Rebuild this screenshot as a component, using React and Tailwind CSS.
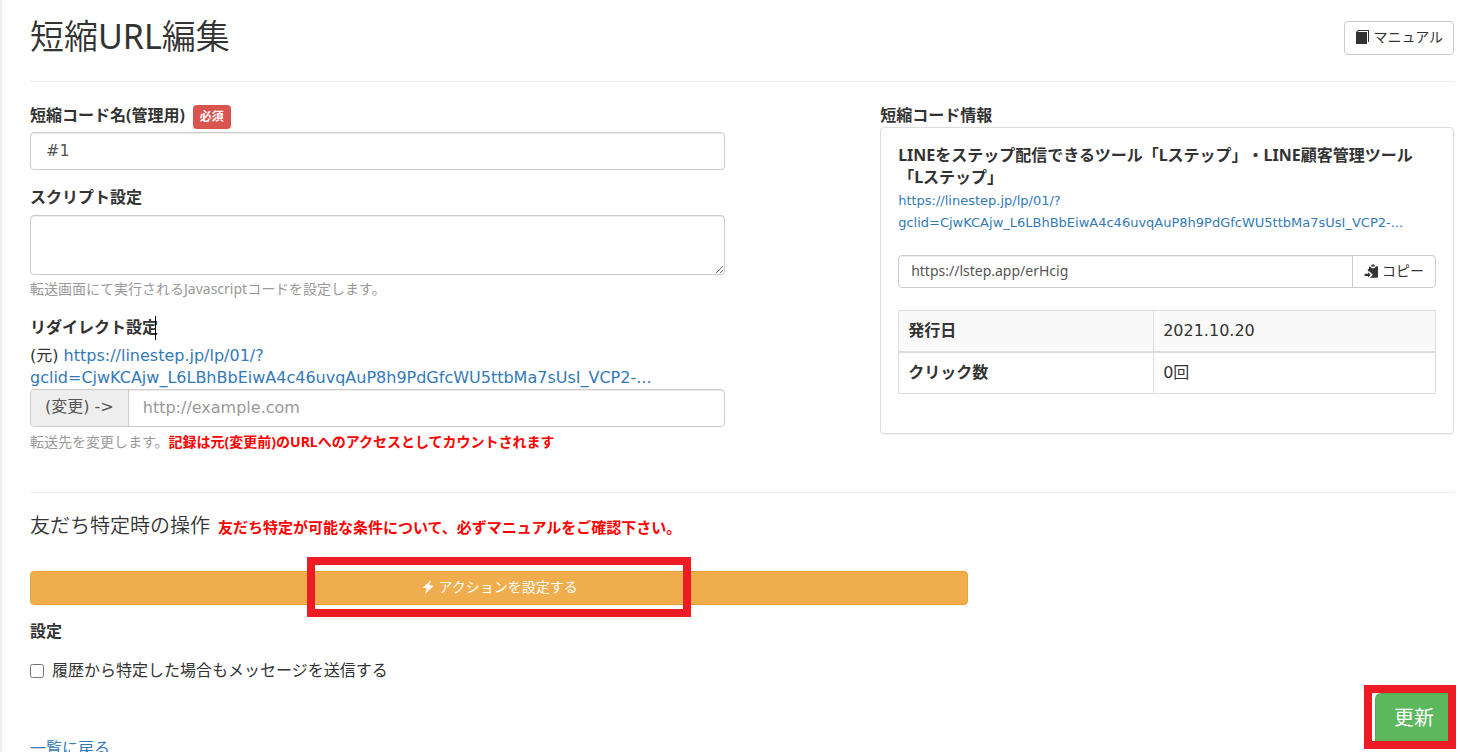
import React from "react";

const ORIGINAL_URL =
  "https://linestep.jp/lp/01/?gclid=CjwKCAjw_L6LBhBbEiwA4c46uvqAuP8h9PdGfcWU5ttbMa7sUsI_VCP2-...";

function BookIcon() {
  return (
    <svg viewBox="0 0 14 14" className="h-3.5 w-3.5" aria-hidden="true">
      <path d="M3 0h11v12h-1V1H3.500L2.500 2H12v12H1V2z" fill="currentColor" />
    </svg>
  );
}

function CopyIcon() {
  return (
    <svg viewBox="0 0 14 14" className="h-3.5 w-3.5" aria-hidden="true">
      <path
        d="M7 2.300C7 1 7.900.400 9 .400s2 .600 2 1.900L9.900 2.500H8.100zM6 2.300 7.600 4.300h2.800L12 2.300h1.200c.5 0 .8.3.8.8V13c0 .5-.3.8-.8.8H5.800L8.800 10.800 5.500 7.500 4.300 7.200 3.600 5.400 5 4.800V3z"
        fill="currentColor"
      />
      <path d="M4 8.200 6.800 10.800 4 13.400V11.900H.6V9.700H4z" fill="currentColor" />
    </svg>
  );
}

function FlashIcon() {
  return (
    <svg viewBox="0 0 14 14" className="h-3.5 w-3.5" aria-hidden="true">
      <path d="M10 0 1.800 7.800 6 8.500 3.800 14 12.800 5.700 8.200 5.200z" fill="currentColor" />
    </svg>
  );
}

function OriginalLink() {
  return (
    <a href={ORIGINAL_URL} className="text-[#337ab7]">
      https://linestep.jp/lp/01/?<wbr />
      gclid=CjwKCAjw_L6LBhBbEiwA4c46uvqAuP8h9PdGfcWU5ttbMa7sUsI_VCP2-...
    </a>
  );
}

export default function App() {
  return (
    <div className="h-screen overflow-hidden border-l-2 border-[#eeeeee] bg-white pr-1.5 pl-7 font-['Noto_Sans','Noto_Sans_CJK_JP',sans-serif] text-base leading-[22px] text-[#333333] [text-spacing-trim:space-all]">
      <header className="flex h-[82px] items-start justify-between border-b border-[#eeeeee]">
        <h1 className="pt-4 text-[34px] leading-10 font-[350]">
          短縮<span className="font-normal">URL</span>編集
        </h1>
        <a
          href="#manual"
          className="mt-[21px] flex h-[34px] items-center gap-1 rounded border border-[#cccccc] px-2.5 pb-0.5 text-sm"
        >
          <BookIcon />
          マニュアル
        </a>
      </header>

      <main>
        <div className="flex items-start justify-between border-b border-[#eeeeee] pt-[22px] pb-[39px]">
          <form className="w-[48.8%]">
            <div className="flex h-7 items-start gap-2">
              <label htmlFor="code-name" className="font-bold">
                短縮コード名(管理用)
              </label>
              <span className="mt-px flex h-6 items-center rounded-sm bg-[#d9534f] px-[7px] text-xs font-bold text-white">
                必須
              </span>
            </div>
            <input
              id="code-name"
              type="text"
              defaultValue="#1"
              className="block h-[38px] w-full rounded border border-[#cccccc] px-[15px] pb-0.5 font-['DejaVu_Sans','Noto_Sans_CJK_JP',sans-serif] text-[#555555] shadow-[inset_0_1px_1px_rgba(0,0,0,0.075)]"
            />

            <label htmlFor="script" className="mt-4 mb-[7px] block font-bold">
              スクリプト設定
            </label>
            <textarea
              id="script"
              className="block h-[60px] w-full resize-y rounded border border-[#cccccc] px-3 py-1.5 shadow-[inset_0_1px_1px_rgba(0,0,0,0.075)]"
            />
            <p className="mt-[3px] text-sm leading-[22px] text-[#999999]">
              転送画面にて実行されるJavascriptコードを設定します。
            </p>

            <div className="mt-4 mb-[7px] flex">
              <label htmlFor="redirect" className="relative font-bold">
                リダイレクト設定
                <span className="absolute top-0 right-0.5 h-6 w-px bg-black" />
              </label>
            </div>
            <p className="font-['DejaVu_Sans','Noto_Sans_CJK_JP',sans-serif]">
              (元) <OriginalLink />
            </p>
            <div className="flex h-[38px] rounded border border-[#cccccc] font-['DejaVu_Sans','Noto_Sans_CJK_JP',sans-serif]">
              <span className="flex items-center rounded-l border-r border-[#cccccc] bg-[#eeeeee] px-3.5 pb-0.5 text-[#555555]">
                (変更) -&gt;
              </span>
              <input
                id="redirect"
                type="text"
                placeholder="http://example.com"
                className="min-w-0 flex-1 rounded-r px-3.5 shadow-[inset_0_1px_1px_rgba(0,0,0,0.075)] placeholder:text-[#999999]"
              />
            </div>
            <p className="mt-1 text-sm leading-[22px] text-[#999999]">
              転送先を変更します。
              <strong className="text-[#ff0000]">
                記録は元(変更前)のURLへのアクセスとしてカウントされます
              </strong>
            </p>
          </form>

          <section className="w-[40.3%]">
            <h2 className="font-bold">短縮コード情報</h2>
            <div className="mt-px rounded border border-[#dddddd] px-[17px] pt-4 pb-[39px] shadow-[0_1px_1px_rgba(0,0,0,0.05)]">
              <p className="font-bold">
                LINEをステップ配信できるツール「Lステップ」・LINE顧客管理ツール「Lステップ」
              </p>
              <p className="pt-0.5 font-['DejaVu_Sans','Noto_Sans_CJK_JP',sans-serif] text-[13px] leading-[22px]">
                <OriginalLink />
              </p>
              <div className="mt-[21px] flex h-[33px] rounded border border-[#cccccc] text-sm">
                <input
                  type="text"
                  readOnly
                  aria-label="短縮URL"
                  defaultValue="https://lstep.app/erHcig"
                  className="min-w-0 flex-1 rounded-l px-3 pb-0.5 text-[#555555] shadow-[inset_0_1px_1px_rgba(0,0,0,0.075)]"
                />
                <button
                  type="button"
                  className="flex items-center gap-1 border-l border-[#cccccc] px-[11px] pb-0.5"
                >
                  <CopyIcon />
                  コピー
                </button>
              </div>
              <table className="mt-[22px] w-full table-fixed border-collapse border border-[#dddddd] text-left">
                <tbody>
                  <tr className="h-[41px] border-b-2 border-[#dddddd] bg-[#f9f9f9]">
                    <th scope="row" className="w-[47.5%] border-r border-[#dddddd] px-[9px] pb-0.5 font-bold">
                      発行日
                    </th>
                    <td className="px-[9px] font-['DejaVu_Sans','Noto_Sans_CJK_JP',sans-serif]">2021.10.20</td>
                  </tr>
                  <tr className="h-[42px]">
                    <th scope="row" className="border-r border-[#dddddd] px-[9px] pb-0.5 font-bold">
                      クリック数
                    </th>
                    <td className="px-[9px] font-['DejaVu_Sans','Noto_Sans_CJK_JP',sans-serif]">0回</td>
                  </tr>
                </tbody>
              </table>
            </div>
          </section>
        </div>

        <h2 className="mt-[21px] flex items-baseline gap-2 text-xl leading-6 font-[350]">
          友だち特定時の操作
          <strong className="text-[15px] font-bold text-[#ff0000]">
            友だち特定が可能な条件について、必ずマニュアルをご確認下さい。
          </strong>
        </h2>

        <div className="relative mt-8 flex w-[65.9%] justify-center">
          <button
            type="button"
            className="flex h-[34px] w-full items-center justify-center gap-1 rounded-sm border border-[#eea236] bg-[#f0ad4e] pb-0.5 text-sm text-white"
          >
            <FlashIcon />
            アクションを設定する
          </button>
          <div className="pointer-events-none absolute -top-3.5 -bottom-3 w-96 border-8 border-[#ed1c24]" />
        </div>

        <h3 className="mt-[15px] font-bold">設定</h3>
        <label className="mt-[17px] flex items-center gap-2">
          <input type="checkbox" className="mt-0.5 h-3.5 w-3.5" />
          履歴から特定した場合もメッセージを送信する
        </label>
        <a href="#list" className="mt-14 inline-block text-[#337ab7]">
          一覧に戻る
        </a>
      </main>

      <div className="fixed right-1 bottom-[3px] border-8 border-[#ed1c24] bg-white pl-[3px]">
        <button
          type="button"
          className="block h-12 w-[73px] rounded-tl-md border-t border-l border-[#4cae4c] bg-[#5cb85c] pl-[4px] text-xl text-white"
        >
          更新
        </button>
      </div>
    </div>
  );
}
